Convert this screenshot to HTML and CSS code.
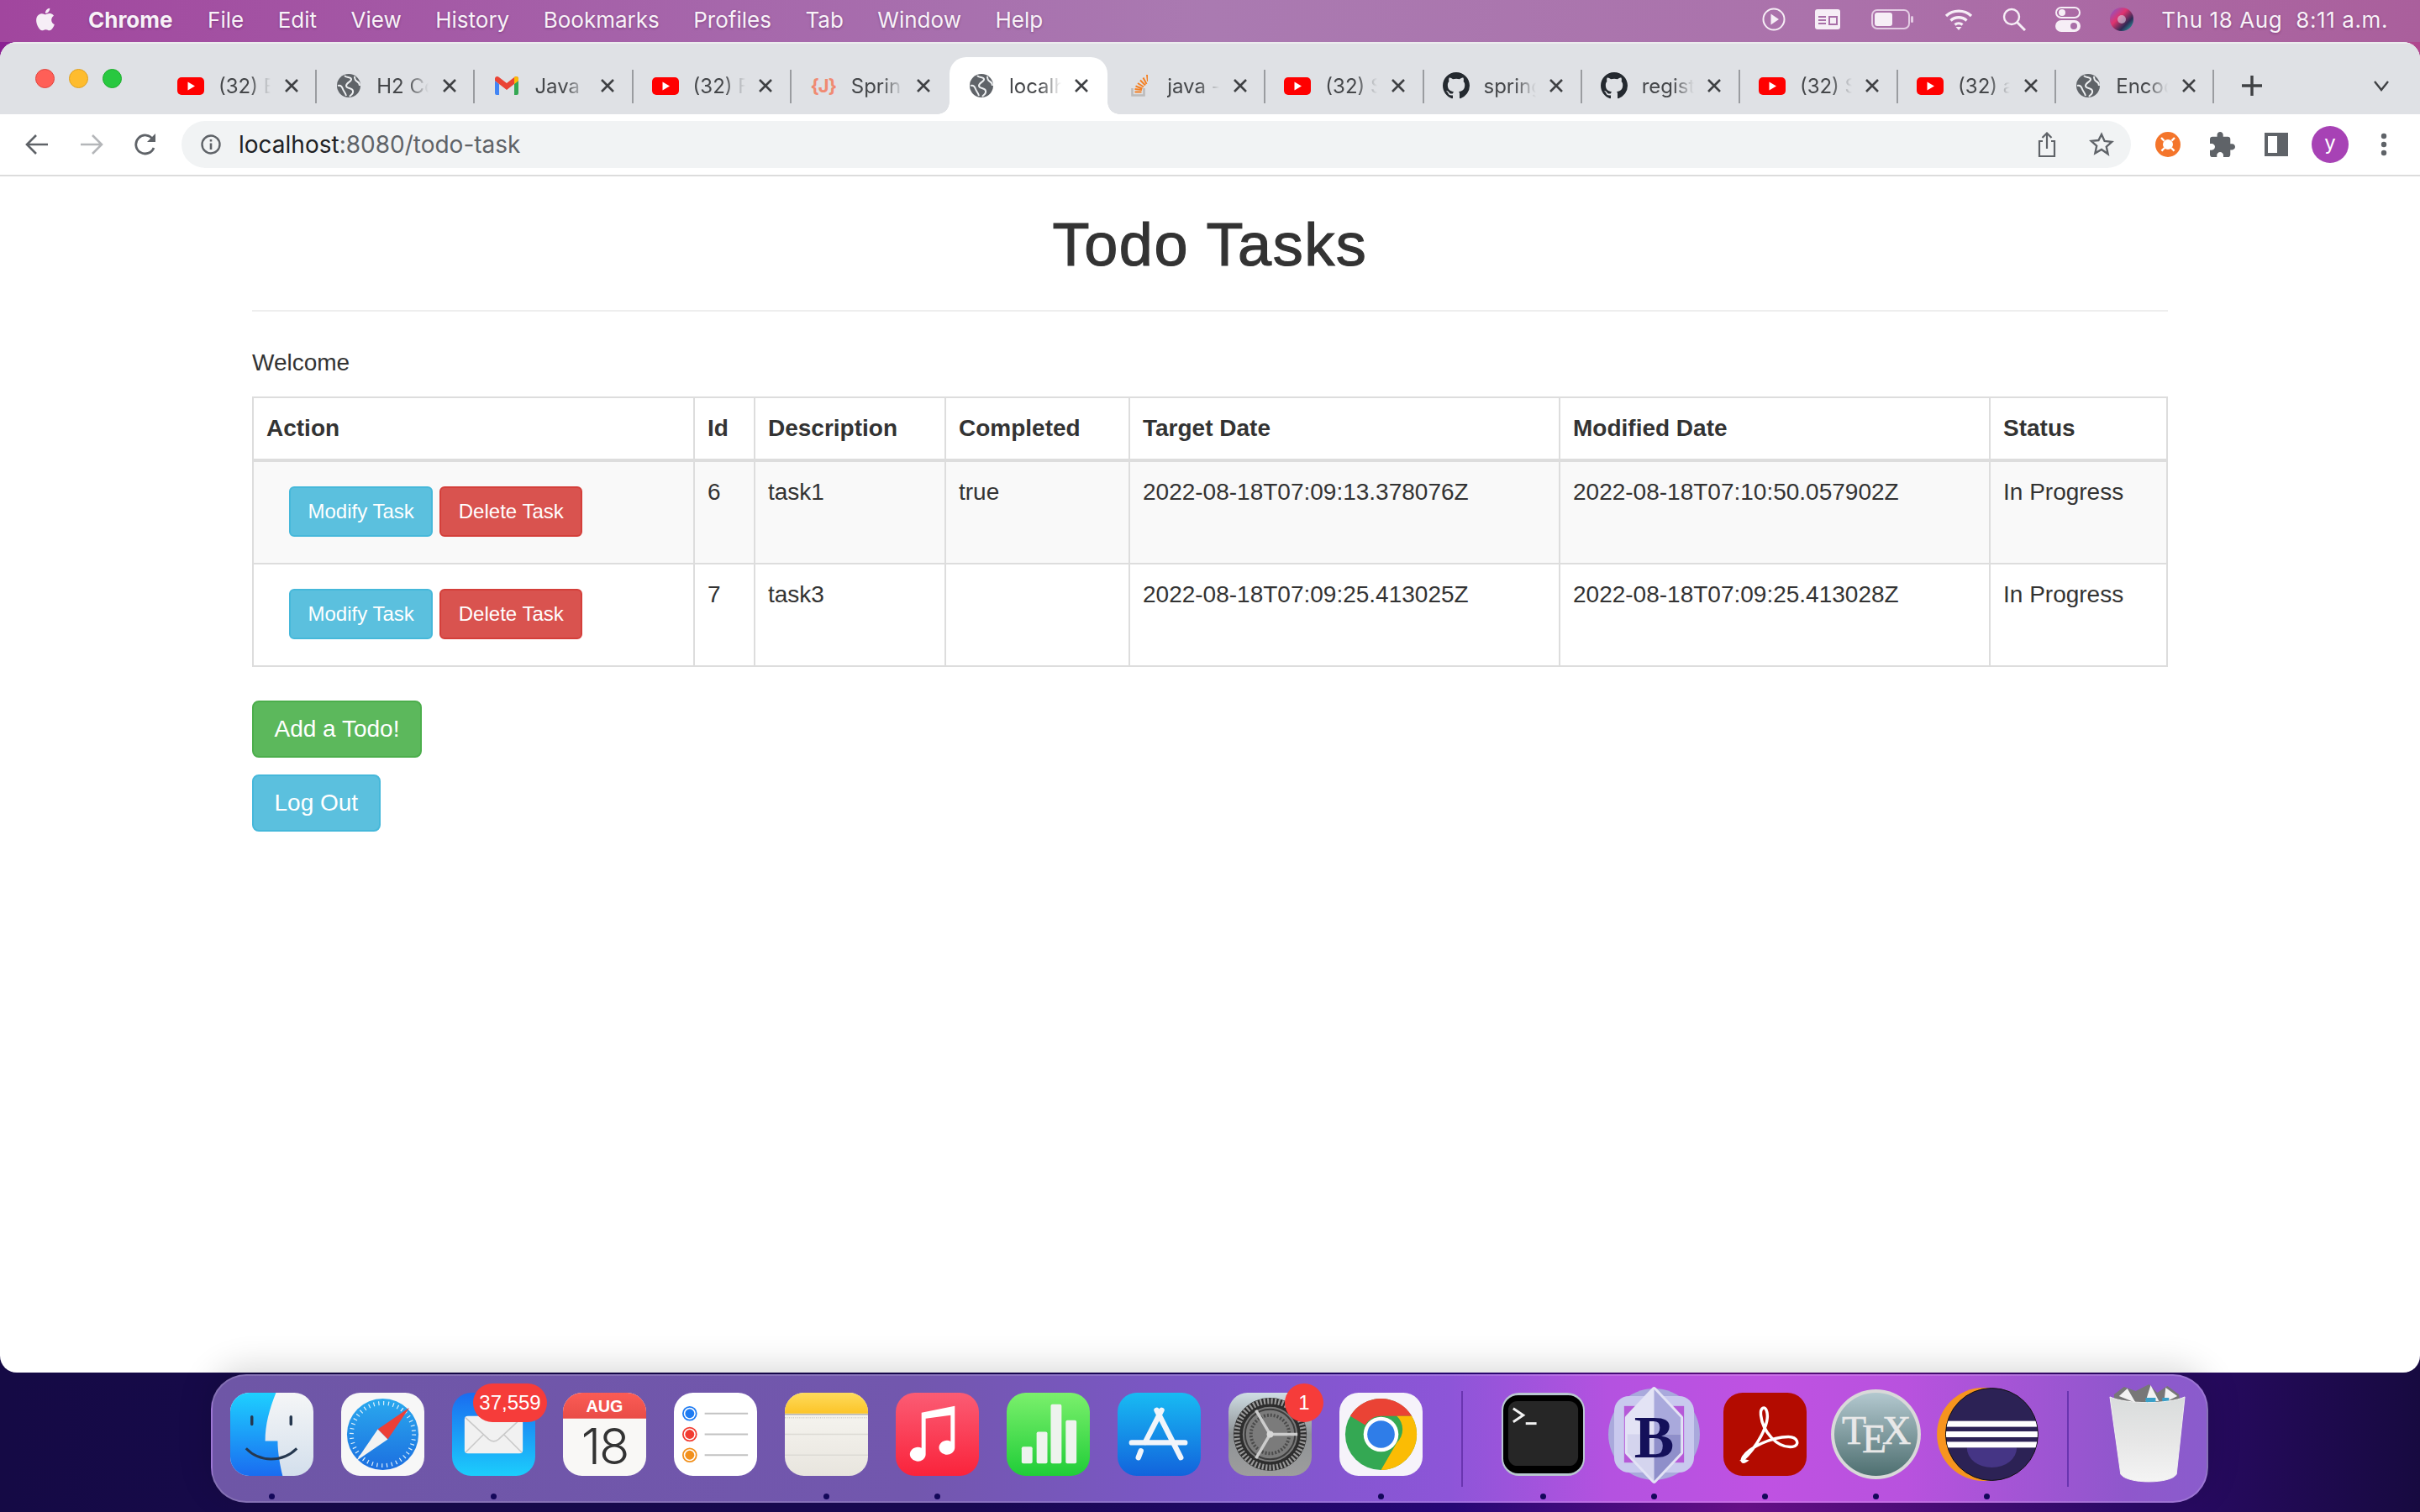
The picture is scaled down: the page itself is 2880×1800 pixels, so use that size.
FILE: index.html
```html
<!DOCTYPE html>
<html lang="en">
<head>
    <meta charset="UTF-8">
    <title>Todo Tasks</title>
    <link rel="stylesheet" href="styles.css">
</head>
<body>
    <svg class="sprites" width="0" height="0">
        <symbol id="yt" viewBox="0 0 32 21">
            <rect width="32" height="21" rx="5" fill="#f00"/>
            <path d="M12.500 5.500 21 10.500 12.500 15.500z" fill="#fff"/>
        </symbol>
        <symbol id="globe" viewBox="0 0 28 28">
            <circle cx="14" cy="14" r="14" fill="#5f6368"/>
            <path d="M9 2c2 3 7 1 8 4s-6 4-6 8 7 2 8 6-2 4-4 7" fill="none" stroke="#eceef0" stroke-width="2"/>
            <path d="M1 14c3-1 5 1 6 4s3 4 4 8M21 3c0 3 1 5 3 6s3 3 3 5" fill="none" stroke="#eceef0" stroke-width="2"/>
        </symbol>
        <symbol id="github" viewBox="0 0 16 16">
            <path fill="#24292f" d="M8 0C3.58 0 0 3.58 0 8c0 3.54 2.29 6.53 5.47 7.59.4.07.55-.17.55-.38 0-.19-.01-.82-.01-1.49-2.01.37-2.53-.49-2.69-.94-.09-.23-.48-.94-.82-1.13-.28-.15-.68-.52-.01-.53.63-.01 1.08.58 1.23.82.72 1.21 1.87.87 2.33.66.07-.52.28-.87.51-1.07-1.78-.2-3.64-.89-3.64-3.95 0-.87.31-1.59.82-2.15-.08-.2-.36-1.02.08-2.12 0 0 .67-.21 2.2.82.64-.18 1.32-.27 2-.27.68 0 1.36.09 2 .27 1.53-1.04 2.2-.82 2.2-.82.44 1.1.16 1.92.08 2.12.51.56.82 1.27.82 2.15 0 3.07-1.87 3.75-3.65 3.95.29.25.54.73.54 1.48 0 1.07-.01 1.93-.01 2.2 0 .21.15.46.55.38A8.013 8.013 0 0016 8c0-4.42-3.58-8-8-8z"/>
        </symbol>
        <symbol id="gmail" viewBox="0 0 30 24">
            <path d="M1 23V6l5 4v13H3a2 2 0 0 1-2-2z" fill="#4285f4"/>
            <path d="M24 23V10l5-4v15a2 2 0 0 1-2 2z" fill="#34a853"/>
            <path d="M1 6V4c0-3 3-4 5-2l9 7 9-7c2-2 5-1 5 2v2l-5 4-9 7-9-7z" fill="#ea4335"/>
            <path d="M24 2c2-2 5-1 5 2v2l-5 4z" fill="#fbbc04"/>
        </symbol>
        <symbol id="so" viewBox="0 0 20 26">
            <path d="M1.500 16v8.500h14V16" fill="none" stroke="#bcbbbb" stroke-width="2.600"/>
            <path d="M4.500 20.500h8M4.500 17l8.500 1M5.500 13.500l8 3M8 10l7 4.500M11 6.500l6 6M14.500 3.500l4 7.500M19 0l1 8" fill="none" stroke="#f48024" stroke-width="2"/>
        </symbol>
        <symbol id="close" viewBox="0 0 18 18">
            <path d="M2 2 16 16M16 2 2 16" stroke="#3f4144" stroke-width="2.600" fill="none"/>
        </symbol>
    </svg>

    <div class="menubar">
        <div class="menu-left">
            <svg class="apple" viewBox="0 0 24 24"><path fill="#f6eef6" d="M18.71 19.5c-.83 1.24-1.71 2.45-3.05 2.47-1.34.03-1.77-.79-3.29-.79-1.53 0-2 .77-3.27.82-1.31.05-2.3-1.32-3.14-2.53C4.25 17 2.94 12.45 4.7 9.39c.87-1.52 2.43-2.48 4.12-2.51 1.28-.02 2.5.87 3.29.87.78 0 2.26-1.07 3.81-.91.65.03 2.47.26 3.64 1.98-.09.06-2.17 1.28-2.15 3.81.03 3.02 2.65 4.03 2.68 4.04-.03.07-.42 1.44-1.38 2.83M13 3.5c.73-.83 1.94-1.46 2.94-1.5.13 1.17-.34 2.35-1.04 3.19-.69.85-1.83 1.51-2.95 1.42-.15-1.15.41-2.35 1.05-3.11z"/></svg>
            <span class="app-name">Chrome</span>
            <span>File</span>
            <span>Edit</span>
            <span>View</span>
            <span>History</span>
            <span>Bookmarks</span>
            <span>Profiles</span>
            <span>Tab</span>
            <span>Window</span>
            <span>Help</span>
        </div>
        <div class="menu-right">
            <svg class="status" width="28" height="30" viewBox="0 0 28 30"><circle cx="14" cy="15" r="12.500" fill="none" stroke="#f6eef6" stroke-width="2"/><path d="M10.500 8.500 20 15l-9.500 6.500z" fill="#f6eef6"/></svg>
            <svg class="status" width="30" height="24" viewBox="0 0 30 24"><rect width="30" height="24" rx="3" fill="#f6eef6"/><path d="M4 9h9M4 13h9M4 17h9M17 9h9v9h-9z" stroke="#a86fa8" stroke-width="2" fill="none"/></svg>
            <svg class="status status-battery" width="50" height="24" viewBox="0 0 50 24"><rect x="1" y="1" width="44" height="22" rx="6" fill="none" stroke="#e3cbe3" stroke-width="2"/><rect x="4" y="4" width="21" height="16" rx="3" fill="#f6eef6"/><rect x="47" y="8" width="3" height="8" rx="1.500" fill="#e3cbe3"/></svg>
            <svg class="status" width="34" height="26" viewBox="0 0 34 26"><path d="M2 9a22 22 0 0 1 30 0M7.500 14.500a14 14 0 0 1 19 0M12.500 19.500a7 7 0 0 1 9 0" fill="none" stroke="#f6eef6" stroke-width="3.400"/><path d="M17 26l-3.500-4h7z" fill="#f6eef6"/></svg>
            <svg class="status" width="28" height="28" viewBox="0 0 28 28"><circle cx="11" cy="11" r="9" fill="none" stroke="#f6eef6" stroke-width="2.400"/><path d="M17.500 17.500 27 27" stroke="#f6eef6" stroke-width="3"/></svg>
            <svg class="status" width="30" height="30" viewBox="0 0 30 30"><rect x="1" y="1" width="28" height="12" rx="6" fill="none" stroke="#f6eef6" stroke-width="2"/><circle cx="8" cy="7" r="4" fill="#f6eef6"/><rect y="16" width="30" height="14" rx="7" fill="#f6eef6"/><circle cx="22" cy="23" r="4" fill="#a86fa8"/></svg>
            <svg class="status" width="28" height="28" viewBox="0 0 28 28"><defs><linearGradient id="siri" x1="0" y1="0" x2="1" y2="1"><stop offset="0" stop-color="#7c5cd6"/><stop offset=".4" stop-color="#e0336e"/><stop offset=".7" stop-color="#2d2a55"/><stop offset="1" stop-color="#27c4b5"/></linearGradient></defs><circle cx="14" cy="14" r="14" fill="url(#siri)"/><circle cx="14" cy="14" r="5" fill="#d9d3e8" opacity=".6"/></svg>
            <span class="clock">Thu 18 Aug&nbsp;&nbsp;8:11 a.m.</span>
        </div>
    </div>

    <div class="window">
        <div class="tabstrip">
            <div class="traffic">
                <span class="light red"></span>
                <span class="light yellow"></span>
                <span class="light green"></span>
            </div>
            <div class="tab"><span class="favicon"><svg width="32" height="21"><use href="#yt"/></svg></span><span class="tab-title">(32) E</span><svg class="tab-close"><use href="#close"/></svg></div>
            <div class="tab"><span class="favicon"><svg width="28" height="28"><use href="#globe"/></svg></span><span class="tab-title">H2 Co</span><svg class="tab-close"><use href="#close"/></svg></div>
            <div class="tab"><span class="favicon"><svg width="30" height="24"><use href="#gmail"/></svg></span><span class="tab-title">Java</span><svg class="tab-close"><use href="#close"/></svg></div>
            <div class="tab"><span class="favicon"><svg width="32" height="21"><use href="#yt"/></svg></span><span class="tab-title">(32) F</span><svg class="tab-close"><use href="#close"/></svg></div>
            <div class="tab no-sep"><span class="favicon java-icon">{J}</span><span class="tab-title">Sprin</span><svg class="tab-close"><use href="#close"/></svg></div>
            <div class="tab active no-sep"><span class="favicon"><svg width="28" height="28"><use href="#globe"/></svg></span><span class="tab-title">localh</span><svg class="tab-close"><use href="#close"/></svg></div>
            <div class="tab"><span class="favicon"><svg width="20" height="26"><use href="#so"/></svg></span><span class="tab-title">java -</span><svg class="tab-close"><use href="#close"/></svg></div>
            <div class="tab"><span class="favicon"><svg width="32" height="21"><use href="#yt"/></svg></span><span class="tab-title">(32) S</span><svg class="tab-close"><use href="#close"/></svg></div>
            <div class="tab"><span class="favicon"><svg width="32" height="32"><use href="#github"/></svg></span><span class="tab-title">spring</span><svg class="tab-close"><use href="#close"/></svg></div>
            <div class="tab"><span class="favicon"><svg width="32" height="32"><use href="#github"/></svg></span><span class="tab-title">regist</span><svg class="tab-close"><use href="#close"/></svg></div>
            <div class="tab"><span class="favicon"><svg width="32" height="21"><use href="#yt"/></svg></span><span class="tab-title">(32) S</span><svg class="tab-close"><use href="#close"/></svg></div>
            <div class="tab"><span class="favicon"><svg width="32" height="21"><use href="#yt"/></svg></span><span class="tab-title">(32) a</span><svg class="tab-close"><use href="#close"/></svg></div>
            <div class="tab"><span class="favicon"><svg width="28" height="28"><use href="#globe"/></svg></span><span class="tab-title">Encod</span><svg class="tab-close"><use href="#close"/></svg></div>
            <svg class="new-tab" width="26" height="26" viewBox="0 0 26 26"><path d="M13 1v24M1 13h24" stroke="#3f4144" stroke-width="3.400"/></svg>
            <svg class="tab-list" width="20" height="14" viewBox="0 0 20 14"><path d="M2 2l8 10 8-10" fill="none" stroke="#3f4144" stroke-width="2.400"/></svg>
        </div>

        <div class="toolbar">
            <svg class="nav-btn" width="28" height="26" viewBox="0 0 28 26"><path d="M27 13H3M13 2 2 13l11 11" fill="none" stroke="#5f6368" stroke-width="2.600"/></svg>
            <svg class="nav-btn" width="28" height="26" viewBox="0 0 28 26"><path d="M1 13h24M15 2l11 11-11 11" fill="none" stroke="#b4b6b9" stroke-width="2.600"/></svg>
            <svg class="nav-btn" width="28" height="28" viewBox="0 0 28 28"><path d="M23 18a11 11 0 1 1-1-10" fill="none" stroke="#5f6368" stroke-width="2.800"/><path d="M25 1v10H15z" fill="#5f6368"/></svg>
            <div class="omnibox">
                <svg class="info" width="24" height="24" viewBox="0 0 24 24"><circle cx="12" cy="12" r="10.500" fill="none" stroke="#5f6368" stroke-width="2.400"/><path d="M12 10.500V18M12 6v2.500" stroke="#5f6368" stroke-width="2.600"/></svg>
                <span class="url"><span class="host">localhost</span>:8080/todo-task</span>
                <svg class="omni-icon" width="22" height="30" viewBox="0 0 22 30"><path d="M6 11H2v18h18V11h-4M11 20V2M5.500 7 11 1.500 16.500 7" fill="none" stroke="#5f6368" stroke-width="2.200"/></svg>
                <svg class="omni-icon" width="30" height="30" viewBox="0 0 30 30"><path d="M15 3l3.600 8 8.700.9-6.500 5.800 1.800 8.600L15 21l-7.600 4.300 1.800-8.600-6.500-5.800 8.700-.9z" fill="none" stroke="#5f6368" stroke-width="2.400"/></svg>
            </div>
            <div class="toolbar-right">
                <svg width="30" height="30" viewBox="0 0 30 30"><circle cx="15" cy="15" r="15" fill="#f4752b"/><circle cx="15" cy="15" r="6" fill="#fff"/><path d="M7 7l16 16M23 7 7 23" stroke="#fff" stroke-width="2.400" stroke-dasharray="5 12 5 20"/></svg>
                <svg width="30" height="30" viewBox="2 1 21 21"><path fill="#5f6368" d="M20.500 11H19V7c0-1.100-.9-2-2-2h-4V3.500C13 2.120 11.880 1 10.500 1S8 2.120 8 3.500V5H4c-1.100 0-1.990.9-1.990 2v3.800H3.500c1.490 0 2.700 1.210 2.700 2.700s-1.210 2.700-2.700 2.700H2V20c0 1.100.9 2 2 2h3.800v-1.500c0-1.490 1.210-2.700 2.700-2.700 1.490 0 2.700 1.210 2.700 2.700V22H17c1.100 0 2-.9 2-2v-4h1.500c1.380 0 2.500-1.120 2.500-2.500S21.880 11 20.500 11z"/></svg>
                <svg width="28" height="28" viewBox="0 0 28 28"><path d="M0 0h28v28H0zM4 4v20h11V4z" fill="#5f6368" fill-rule="evenodd"/></svg>
                <span class="avatar">y</span>
                <svg class="kebab" width="8" height="28" viewBox="0 0 8 28"><circle cx="4" cy="4" r="3.200" fill="#5f6368"/><circle cx="4" cy="14" r="3.200" fill="#5f6368"/><circle cx="4" cy="24" r="3.200" fill="#5f6368"/></svg>
            </div>
        </div>

        <div class="page">
            <div class="container">
                <h1>Todo Tasks</h1>
                <hr>
                <p class="welcome">Welcome</p>
                <table class="task-table">
                    <thead>
                        <tr>
                            <th class="col-action">Action</th>
                            <th class="col-id">Id</th>
                            <th class="col-desc">Description</th>
                            <th class="col-done">Completed</th>
                            <th class="col-date">Target Date</th>
                            <th class="col-date">Modified Date</th>
                            <th class="col-status">Status</th>
                        </tr>
                    </thead>
                    <tbody>
                        <tr class="striped">
                            <td><div class="actions"><a class="btn btn-sm btn-info">Modify Task</a><a class="btn btn-sm btn-danger">Delete Task</a></div></td>
                            <td>6</td>
                            <td>task1</td>
                            <td>true</td>
                            <td>2022-08-18T07:09:13.378076Z</td>
                            <td>2022-08-18T07:10:50.057902Z</td>
                            <td>In Progress</td>
                        </tr>
                        <tr>
                            <td><div class="actions"><a class="btn btn-sm btn-info">Modify Task</a><a class="btn btn-sm btn-danger">Delete Task</a></div></td>
                            <td>7</td>
                            <td>task3</td>
                            <td></td>
                            <td>2022-08-18T07:09:25.413025Z</td>
                            <td>2022-08-18T07:09:25.413028Z</td>
                            <td>In Progress</td>
                        </tr>
                    </tbody>
                </table>
                <div class="page-actions">
                    <a class="btn btn-success">Add a Todo!</a>
                    <a class="btn btn-info">Log Out</a>
                </div>
            </div>
        </div>
    </div>

    <div class="dock">
        <!-- Finder -->
        <div class="dock-item running">
            <svg class="dock-icon" viewBox="0 0 100 100">
                <defs>
                    <linearGradient id="finderL" x1="0" y1="0" x2="0" y2="1"><stop offset="0" stop-color="#1ed0ff"/><stop offset="1" stop-color="#1a6cf0"/></linearGradient>
                    <linearGradient id="finderR" x1="0" y1="0" x2="0" y2="1"><stop offset="0" stop-color="#f5f6f7"/><stop offset="1" stop-color="#d3dfec"/></linearGradient>
                </defs>
                <rect width="100" height="100" rx="23" fill="url(#finderR)"/>
                <path d="M23 0H55C47 20 42 38 42 58H57C57 72 60 88 63 100H23A23 23 0 0 1 0 77V23A23 23 0 0 1 23 0z" fill="url(#finderL)"/>
                <path d="M26 29v9M73 29v9" stroke="#26384f" stroke-width="3.500" stroke-linecap="round"/>
                <path d="M19 67c16 17 44 17 61 0" fill="none" stroke="#26384f" stroke-width="3"/>
            </svg>
        </div>
        <!-- Safari -->
        <div class="dock-item">
            <svg class="dock-icon" viewBox="0 0 100 100">
                <defs><linearGradient id="safariB" x1="0" y1="0" x2="0" y2="1"><stop offset="0" stop-color="#2aa9ee"/><stop offset="1" stop-color="#1c6fe0"/></linearGradient></defs>
                <rect width="100" height="100" rx="23" fill="#f7f7f7"/>
                <circle cx="50" cy="50" r="43" fill="url(#safariB)"/>
                <circle cx="50" cy="50" r="37.500" fill="none" stroke="#dff0fb" stroke-width="5" stroke-dasharray="1.200 4.700"/>
                <path d="M82 18 44 44 56 56z" fill="#ec3f37"/>
                <path d="M18 82 44 44 56 56z" fill="#f2f2f2"/>
            </svg>
        </div>
        <!-- Mail -->
        <div class="dock-item running">
            <svg class="dock-icon" viewBox="0 0 100 100">
                <defs><linearGradient id="mailB" x1="0" y1="0" x2="0" y2="1"><stop offset="0" stop-color="#1a6cf0"/><stop offset="1" stop-color="#1ccdfc"/></linearGradient></defs>
                <rect width="100" height="100" rx="23" fill="url(#mailB)"/>
                <rect x="15" y="28" width="70" height="45" rx="4" fill="#f1f1f1"/>
                <path d="M16 30 44 56q6 5 12 0L84 30M16 72 38 50M84 72 62 50" fill="none" stroke="#c9c9c9" stroke-width="1.600"/>
            </svg>
            <span class="badge badge-wide">37,559</span>
        </div>
        <!-- Calendar -->
        <div class="dock-item">
            <svg class="dock-icon" viewBox="0 0 100 100">
                <defs><linearGradient id="calR" x1="0" y1="0" x2="0" y2="1"><stop offset="0" stop-color="#fb5c55"/><stop offset="1" stop-color="#e94c47"/></linearGradient></defs>
                <rect width="100" height="100" rx="23" fill="#f9f8f6"/>
                <path d="M23 0H77A23 23 0 0 1 100 23V31H0V23A23 23 0 0 1 23 0z" fill="url(#calR)"/>
                <text class="cal-month" x="50" y="23" text-anchor="middle">AUG</text>
                <text class="cal-day" x="50" y="86" text-anchor="middle">18</text>
            </svg>
        </div>
        <!-- Reminders -->
        <div class="dock-item">
            <svg class="dock-icon" viewBox="0 0 100 100">
                <rect width="100" height="100" rx="23" fill="#fff"/>
                <circle cx="19" cy="25" r="8" fill="#fff" stroke="#1e7bf2" stroke-width="1.800"/><circle cx="19" cy="25" r="5.500" fill="#1e7bf2"/>
                <circle cx="19" cy="50" r="8" fill="#fff" stroke="#f23b30" stroke-width="1.800"/><circle cx="19" cy="50" r="5.500" fill="#f23b30"/>
                <circle cx="19" cy="75" r="8" fill="#fff" stroke="#f2901c" stroke-width="1.800"/><circle cx="19" cy="75" r="5.500" fill="#f2901c"/>
                <path d="M37 25h52M37 50h52M37 75h52" stroke="#c2c2c2" stroke-width="1.800"/>
            </svg>
        </div>
        <!-- Notes -->
        <div class="dock-item running">
            <svg class="dock-icon" viewBox="0 0 100 100">
                <defs>
                    <linearGradient id="notesY" x1="0" y1="0" x2="0" y2="1"><stop offset="0" stop-color="#fedb5c"/><stop offset="1" stop-color="#fcc428"/></linearGradient>
                    <linearGradient id="notesP" x1="0" y1="0" x2="0" y2="1"><stop offset="0" stop-color="#f9f8f4"/><stop offset="1" stop-color="#e8e5de"/></linearGradient>
                </defs>
                <rect width="100" height="100" rx="23" fill="url(#notesP)"/>
                <path d="M23 0H77A23 23 0 0 1 100 23V25H0V23A23 23 0 0 1 23 0z" fill="url(#notesY)"/>
                <path d="M0 26h100" stroke="#b5b2ac" stroke-width="1.500"/>
                <path d="M0 30h100" stroke="#cfccc6" stroke-width="1.500" stroke-dasharray="1 1.500"/>
                <path d="M0 50h100M0 75h100" stroke="#dcdad4" stroke-width="1.500"/>
            </svg>
        </div>
        <!-- Music -->
        <div class="dock-item running">
            <svg class="dock-icon" viewBox="0 0 100 100">
                <defs><linearGradient id="musicR" x1="0" y1="0" x2="0" y2="1"><stop offset="0" stop-color="#fb5c74"/><stop offset="1" stop-color="#fa233b"/></linearGradient></defs>
                <rect width="100" height="100" rx="23" fill="url(#musicR)"/>
                <path d="M36 31v43a9.500 8.500 0 1 1-5-7.500V24l40-8v50a9.500 8.500 0 1 1-5-7.500V27z" fill="#fff"/>
            </svg>
        </div>
        <!-- Numbers -->
        <div class="dock-item">
            <svg class="dock-icon" viewBox="0 0 100 100">
                <defs><linearGradient id="numG" x1="0" y1="0" x2="0" y2="1"><stop offset="0" stop-color="#7bf06c"/><stop offset="1" stop-color="#20cd38"/></linearGradient></defs>
                <rect width="100" height="100" rx="23" fill="url(#numG)"/>
                <rect x="18" y="65" width="13" height="20" rx="2" fill="#eef3ee"/>
                <rect x="36" y="47" width="13" height="38" rx="2" fill="#eef3ee"/>
                <rect x="53" y="14" width="13" height="71" rx="2" fill="#eef3ee"/>
                <rect x="71" y="33" width="13" height="52" rx="2" fill="#eef3ee"/>
            </svg>
        </div>
        <!-- App Store -->
        <div class="dock-item">
            <svg class="dock-icon" viewBox="0 0 100 100">
                <defs><linearGradient id="storeB" x1="0" y1="0" x2="0" y2="1"><stop offset="0" stop-color="#18bbf3"/><stop offset="1" stop-color="#1263dc"/></linearGradient></defs>
                <rect width="100" height="100" rx="23" fill="url(#storeB)"/>
                <path d="M47 21 76 78M53 21 33 60M17 60h64M28 70l-3 8" fill="none" stroke="#f1f5fa" stroke-width="6.500" stroke-linecap="round"/>
            </svg>
        </div>
        <!-- System Preferences -->
        <div class="dock-item">
            <svg class="dock-icon" viewBox="0 0 100 100">
                <defs><linearGradient id="prefG" x1="0" y1="0" x2="0" y2="1"><stop offset="0" stop-color="#cfdde4"/><stop offset=".5" stop-color="#8f9396"/><stop offset="1" stop-color="#9d9d9d"/></linearGradient></defs>
                <rect width="100" height="100" rx="23" fill="url(#prefG)"/>
                <circle cx="50" cy="50" r="44" fill="#2d2d2d"/>
                <circle cx="50" cy="50" r="40" fill="none" stroke="#9a9a9a" stroke-width="7" stroke-dasharray="2.200 2.200"/>
                <circle cx="50" cy="50" r="33" fill="#7b7b7b"/>
                <circle cx="50" cy="50" r="30" fill="none" stroke="#3d3d3d" stroke-width="2"/>
                <circle cx="50" cy="50" r="23" fill="none" stroke="#4a4a4a" stroke-width="4" stroke-dasharray="2 2"/>
                <path d="M50 50 33 21M50 50 83 50M50 50 33 79" stroke="#cdcdcd" stroke-width="3.500"/>
                <circle cx="50" cy="50" r="4" fill="#d8d8d8"/>
            </svg>
            <span class="badge badge-round">1</span>
        </div>
        <!-- Chrome -->
        <div class="dock-item running">
            <svg class="dock-icon" viewBox="0 0 100 100">
                <rect width="100" height="100" rx="23" fill="#f6f3fa"/>
                <circle cx="50" cy="50" r="43" fill="#34a853"/>
                <path d="M50 7A43 43 0 0 1 87 28H50A22 22 0 0 0 31 39L13 28A43 43 0 0 1 50 7z" fill="#ea4335"/>
                <path d="M87 28A43 43 0 0 1 50 93L69 60A22 22 0 0 0 69 28z" fill="#fbbc04"/>
                <circle cx="50" cy="50" r="21" fill="#fff"/>
                <circle cx="50" cy="50" r="16.500" fill="#2f7de8"/>
            </svg>
        </div>
        <div class="dock-divider"></div>
        <!-- Terminal -->
        <div class="dock-item running">
            <svg class="dock-icon" viewBox="0 0 100 100">
                <rect width="100" height="100" rx="21" fill="#b9c7d0"/>
                <rect x="2" y="3" width="96" height="94" rx="18" fill="#000"/>
                <rect x="8" y="10" width="84" height="78" rx="11" fill="#262626"/>
                <path d="M14 19 26 27 14 35" fill="none" stroke="#f3f3f3" stroke-width="3"/>
                <path d="M29 37h13" stroke="#f3f3f3" stroke-width="3"/>
            </svg>
        </div>
        <!-- BBEdit -->
        <div class="dock-item running">
            <svg class="dock-icon" viewBox="0 0 100 100">
                <circle cx="50" cy="50" r="55" fill="#a9a9dc"/>
                <rect x="2" y="4" width="96" height="92" rx="18" fill="#c9c9ee"/>
                <rect x="14" y="16" width="72" height="68" fill="#b659d8"/>
                <path d="M50 -4 82 30V72L50 106 18 72V30z" fill="#e3e3f5" stroke="#e3e3f5" stroke-width="6" stroke-linejoin="round"/>
                <path d="M50 -4 82 30V50H50z" fill="#a9a9dc"/>
                <path d="M50 50H18V72L50 106z" fill="#a9a9dc" opacity=".25"/>
                <path d="M50 50H82V72L50 106z" fill="#8f8fca"/>
                <text class="bb-letter" x="50" y="78" text-anchor="middle">B</text>
            </svg>
        </div>
        <!-- Acrobat -->
        <div class="dock-item running">
            <svg class="dock-icon" viewBox="0 0 100 100">
                <rect width="100" height="100" rx="23" fill="#b30b00"/>
                <path d="M23 81C38 68 57 38 52 22c-2-7-8-4-7 5 2 19 19 40 38 38 10-2 6-12-5-12C58 53 31 66 24 77c-3 5-1 8 3 5z" fill="none" stroke="#fff" stroke-width="3.500"/>
            </svg>
        </div>
        <!-- TeXShop -->
        <div class="dock-item running">
            <svg class="dock-icon" viewBox="0 0 100 100">
                <defs><linearGradient id="texG" x1="0" y1="0" x2="0" y2="1"><stop offset="0" stop-color="#b3c8cf"/><stop offset="1" stop-color="#4e6f70"/></linearGradient></defs>
                <circle cx="50" cy="50" r="54" fill="#d9d9d9"/>
                <circle cx="50" cy="50" r="50" fill="url(#texG)"/>
                <text class="tex-mark" x="9" y="62">T<tspan dx="-5" dy="10">E</tspan><tspan dx="-5" dy="-10">X</tspan></text>
            </svg>
        </div>
        <!-- Eclipse -->
        <div class="dock-item running">
            <svg class="dock-icon" viewBox="0 0 100 100">
                <defs><clipPath id="eclipseDisc"><circle cx="56" cy="50" r="55"/></clipPath></defs>
                <circle cx="46" cy="50" r="56" fill="#f7941e"/>
                <circle cx="56" cy="50" r="55.500" fill="#2c2255" stroke="#111" stroke-width="1"/>
                <g clip-path="url(#eclipseDisc)">
                    <path d="M26 66a30 24 0 0 0 60 0z" fill="#453585"/>
                    <rect x="0" y="34" width="112" height="7" fill="#fff"/>
                    <rect x="0" y="46.500" width="112" height="7" fill="#fff"/>
                    <rect x="0" y="59" width="112" height="7" fill="#fff"/>
                </g>
            </svg>
        </div>
        <div class="dock-divider"></div>
        <!-- Trash -->
        <div class="dock-item">
            <svg class="dock-icon" viewBox="0 0 100 100">
                <defs><linearGradient id="trashG" x1="0" y1="0" x2="0" y2="1"><stop offset="0" stop-color="#d9dcdc"/><stop offset=".5" stop-color="#e6e6e6"/><stop offset="1" stop-color="#f4f4f4"/></linearGradient></defs>
                <path d="M8 2 20 -7 34 -2 50 -10 60 0 72 -8 86 2 88 14H8z" fill="#777"/>
                <path d="M14 4 24 -5 34 12zM46 10 52 -9 62 10zM70 -6 84 4 68 12z" fill="#f2f2f2"/>
                <path d="M46 6h12v6H46zM66 6h8v6h-8z" fill="#3aa0c8"/>
                <path d="M3 5C22 14 74 14 93 5L83 98C76 110 24 110 16 98z" fill="url(#trashG)" stroke="#f0f0f0" stroke-width="1"/>
            </svg>
        </div>
    </div>
</body>
</html>
```

FILE: styles.css
```css
* {
    box-sizing: border-box;
}
html, body {
    height: 100%;
}
body {
    margin: 0;
    width: 2880px;
    height: 1800px;
    overflow: hidden;
    font-family: 'Liberation Sans', sans-serif;
    color: #333;
    background:
        linear-gradient(90deg, #8a1f92, #b0468e) top / 100% 110px no-repeat,
        linear-gradient(90deg, #150a45 0%, #1a0a55 40%, #28087a 60%, #6a108c 72%, #2c0a6a 88%, #170a40 100%);
    display: flex;
    flex-direction: column;
}
.sprites {
    position: absolute;
}

/* Menu bar */
.menubar {
    height: 50px;
    flex: none;
    display: flex;
    justify-content: space-between;
    align-items: center;
    padding: 0 38px 4px 38px;
    background: linear-gradient(90deg, #a1469e 0%, #a667ab 30%, #aa7ab1 50%, #ab72ab 75%, #aa5f9c 100%);
    color: #f8f2f8;
    font-family: 'Inter', sans-serif;
    font-size: 26px;
    text-shadow: 0 1px 3px rgba(60, 0, 60, 0.35);
}
.menu-left {
    display: flex;
    align-items: center;
    gap: 40.500px;
}
.app-name {
    font-weight: 700;
    margin-left: -5.500px;
    margin-right: 1px;
}
.apple {
    width: 32px;
    height: 36px;
}
.menu-right {
    display: flex;
    align-items: center;
    gap: 35px;
}
.status-battery {
    margin-left: 2px;
    margin-right: 2px;
}
.clock {
    margin-left: -2px;
    letter-spacing: 0.6px;
}

/* Browser window */
.window {
    height: 1584px;
    flex: none;
    display: flex;
    flex-direction: column;
    background: #fff;
    border-radius: 20px;
    overflow: hidden;
}
.tabstrip {
    height: 86px;
    flex: none;
    display: flex;
    align-items: flex-end;
    background: #dfe1e5;
    border-top: 2px solid #ececee;
    position: relative;
}
.traffic {
    width: 189px;
    height: 84px;
    flex: none;
    display: flex;
    gap: 17px;
    padding: 30px 0 0 42px;
}
.light {
    width: 23px;
    height: 23px;
    border-radius: 50%;
}
.red { background: #ff5f57; border: 1px solid #e0443e; }
.yellow { background: #febc2e; border: 1px solid #dea123; }
.green { background: #28c840; border: 1px solid #1dad2b; }

.tab {
    width: 188.200px;
    height: 68px;
    flex: none;
    display: flex;
    align-items: center;
    padding-left: 22px;
    position: relative;
    font-family: 'Inter', sans-serif;
    font-size: 24px;
    color: #45474a;
}
.tab::after {
    content: "";
    position: absolute;
    right: 0;
    top: 15px;
    width: 2px;
    height: 40px;
    background: #9a9ca0;
}
.tab.no-sep::after {
    display: none;
}
.tab.active {
    background: #fff;
    border-radius: 20px 20px 0 0;
    z-index: 1;
}
.tab.active::before {
    content: "";
    position: absolute;
    left: -14px;
    right: -14px;
    bottom: 0;
    height: 14px;
    z-index: -1;
    background:
        radial-gradient(circle at 0 0, #dfe1e5 13.500px, #fff 14px) left / 14px 14px no-repeat,
        radial-gradient(circle at 100% 0, #dfe1e5 13.500px, #fff 14px) right / 14px 14px no-repeat;
}
.favicon {
    width: 32px;
    height: 40px;
    flex: none;
    display: flex;
    align-items: center;
    justify-content: center;
}
.java-icon {
    font-size: 22px;
    font-weight: 700;
    color: #f08a72;
    white-space: nowrap;
    letter-spacing: -1px;
}
.tab-title {
    width: 62px;
    margin-left: 17px;
    flex: none;
    overflow: hidden;
    white-space: nowrap;
    -webkit-mask-image: linear-gradient(90deg, #000 60%, transparent);
    mask-image: linear-gradient(90deg, #000 60%, transparent);
}
.tab-close {
    width: 18px;
    height: 18px;
    margin-left: 15.500px;
    flex: none;
}
.new-tab {
    margin: 0 0 21px 32px;
    flex: none;
}
.tab-list {
    margin: 0 0 27px 131px;
    flex: none;
}

/* Toolbar */
.toolbar {
    height: 74px;
    flex: none;
    display: flex;
    align-items: center;
    padding: 0 0 0 30px;
    gap: 37px;
    background: #fff;
    border-bottom: 2px solid #dcdcdc;
}
.nav-btn {
    flex: none;
}
.omnibox {
    width: 2320px;
    height: 56px;
    flex: none;
    margin-left: -9px;
    display: flex;
    align-items: center;
    padding: 0 20px 0 23px;
    background: #f1f3f4;
    border-radius: 28px;
    font-family: 'Inter', sans-serif;
    font-size: 28px;
    color: #5f6368;
}
.url {
    margin-left: 21px;
    flex: 1;
}
.host {
    color: #202124;
}
.omni-icon {
    flex: none;
    margin-left: 39px;
}
.toolbar-right {
    display: flex;
    align-items: center;
    margin-left: -8px;
    gap: 35px;
}
.avatar {
    width: 44px;
    height: 44px;
    margin-left: -7px;
    border-radius: 50%;
    display: flex;
    align-items: center;
    justify-content: center;
    background: #a742b5;
    color: #fff;
    font-family: 'Inter', sans-serif;
    font-size: 24px;
    padding-bottom: 6px;
}
.kebab {
    margin-left: 3px;
}

/* Page content */
.page {
    flex: 1;
    font-size: 28px;
    line-height: 40px;
}
.container {
    width: 2280px;
    margin: 0 auto;
    padding-top: 42px;
}
h1 {
    margin: 0 0 38px;
    font-size: 72px;
    font-weight: 500;
    line-height: 1.1;
    letter-spacing: 1.600px;
    text-align: center;
    -webkit-text-stroke: 1.200px #333;
}
hr {
    margin: 0 0 41px;
    border: 0;
    border-top: 2px solid #eee;
}
.welcome {
    margin: 0 0 20px;
}
.task-table {
    width: 100%;
    table-layout: fixed;
    border-collapse: collapse;
    margin-bottom: 40px;
}
.task-table th,
.task-table td {
    padding: 16px 16px 16px 15px;
    border: 2px solid #ddd;
    text-align: left;
    vertical-align: top;
}
.task-table th {
    border-bottom-width: 4px;
}
.col-action { width: 525px; }
.col-id { width: 72px; }
.col-desc { width: 227px; }
.col-done { width: 219px; }
.col-date { width: 512px; }
.striped {
    background: #f9f9f9;
}
.actions {
    display: flex;
    gap: 8px;
    padding: 13px 0 15px 27px;
}
.btn {
    display: inline-block;
    padding: 12px 24.500px;
    border: 2px solid transparent;
    border-radius: 8px;
    color: #fff;
    font-size: 28px;
    line-height: 40px;
}
.btn-sm {
    padding: 10px 20.500px;
    border-radius: 6px;
    font-size: 24px;
    line-height: 36px;
}
.btn-info {
    background: #5bc0de;
    border-color: #46b8da;
}
.btn-danger {
    background: #d9534f;
    border-color: #d43f3a;
}
.btn-success {
    background: #5cb85c;
    border-color: #4cae4c;
}
.page-actions {
    display: flex;
    flex-direction: column;
    align-items: flex-start;
    gap: 20px;
}

/* Dock */
.dock {
    width: 2377px;
    height: 153px;
    flex: none;
    margin: 2px 0 0 251px;
    display: flex;
    gap: 33px;
    padding: 20px 0 0 21px;
    position: relative;
    border: 2px solid rgba(255, 255, 255, 0.16);
    border-radius: 42px;
    background: linear-gradient(90deg, #6e56a6 0%, #7257ae 35%, #7c57c8 50%, #8d55d8 62%, #b452e0 70%, #bf52e2 78%, #b852de 85%, #8f57cc 96%, #8a5ccc 100%);
    box-shadow: 0 -8px 40px rgba(0, 0, 0, 0.16);
}
.dock-item {
    width: 99px;
    height: 99px;
    flex: none;
    position: relative;
}
.dock-item.running::after {
    content: "";
    position: absolute;
    left: 46px;
    top: 120px;
    width: 7px;
    height: 7px;
    border-radius: 50%;
    background: #14085a;
}
.dock-icon {
    display: block;
    width: 99px;
    height: 99px;
    overflow: visible;
    font-family: 'Liberation Sans', sans-serif;
}
.dock-divider {
    width: 2px;
    height: 114px;
    margin: -2px 13px 0;
    flex: none;
    background: #6a35b0;
}
.badge {
    position: absolute;
    top: -11px;
    height: 46px;
    display: flex;
    align-items: center;
    justify-content: center;
    background: #f63c3a;
    color: #fff;
    font-size: 24px;
    border-radius: 23px;
}
.badge-wide {
    left: 25px;
    width: 88px;
}
.badge-round {
    left: 67px;
    width: 46px;
}
.cal-month {
    font-size: 20px;
    font-weight: 700;
    fill: #fff;
}
.cal-day {
    font-family: 'Inter', sans-serif;
    font-size: 60px;
    font-weight: 300;
    letter-spacing: -2px;
    fill: #333;
}
.bb-letter {
    font-family: 'Liberation Serif', serif;
    font-size: 72px;
    font-weight: 700;
    fill: #14105a;
}
.tex-mark {
    font-family: 'Liberation Serif', serif;
    font-size: 48px;
    fill: #e8e8e8;
    stroke: #e8e8e8;
    stroke-width: 0.6px;
}
```
